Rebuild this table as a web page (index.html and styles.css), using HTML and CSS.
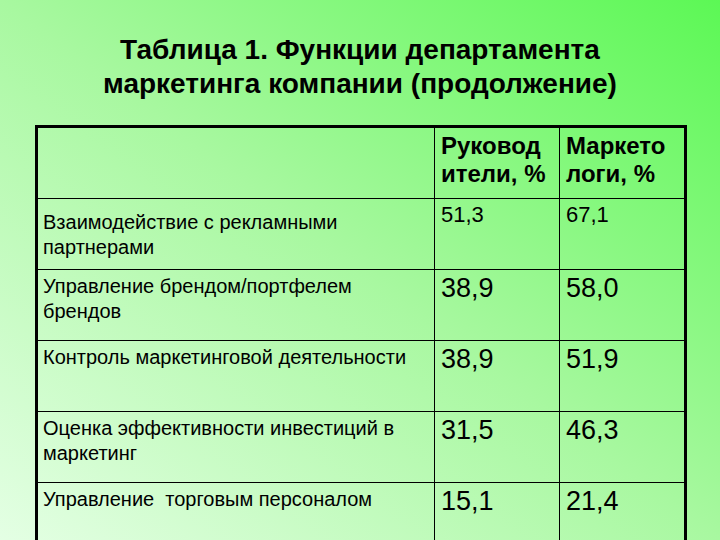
FILE: index.html
```html
<!DOCTYPE html>
<html lang="ru">
<head>
<meta charset="utf-8">
<link rel="stylesheet" href="styles.css">
</head>
<body>
<div class="slide">
  <h1 class="title">Таблица 1. Функции департамента<br>маркетинга компании (продолжение)</h1>
  <table class="grid">
    <colgroup><col class="c1"><col class="c2"><col class="c3"></colgroup>
    <tr class="head">
      <td></td>
      <td class="h">Руковод ители, %</td>
      <td class="h">Маркето логи, %</td>
    </tr>
    <tr class="r1">
      <td class="name">Взаимодействие с рекламными партнерами</td>
      <td class="num small">51,3</td>
      <td class="num small">67,1</td>
    </tr>
    <tr>
      <td class="name">Управление брендом/портфелем брендов</td>
      <td class="num">38,9</td>
      <td class="num">58,0</td>
    </tr>
    <tr>
      <td class="name">Контроль маркетинговой деятельности</td>
      <td class="num">38,9</td>
      <td class="num">51,9</td>
    </tr>
    <tr>
      <td class="name">Оценка эффективности инвестиций в маркетинг</td>
      <td class="num">31,5</td>
      <td class="num">46,3</td>
    </tr>
    <tr>
      <td class="name">Управление&nbsp; торговым персоналом</td>
      <td class="num">15,1</td>
      <td class="num">21,4</td>
    </tr>
  </table>
</div>
</body>
</html>
```
FILE: styles.css
```css
html, body {
  margin: 0;
  padding: 0;
}
body {
  width: 720px;
  height: 540px;
  overflow: hidden;
  background: linear-gradient(to top right, #e4ffe4 0%, #a8f8a0 50%, #5cf855 100%);
  font-family: "Liberation Sans", Arial, sans-serif;
  color: #000;
}
.slide {
  padding: 33px 0 0 35px;
}
.title {
  margin: 0 35px 0 0;
  text-align: center;
  font-size: 28px;
  line-height: 34px;
  font-weight: bold;
  height: 92px;
}
.grid {
  border-collapse: collapse;
  table-layout: fixed;
  width: 649px;
  border: 3px solid #000;
}
.c1 { width: 398px; }
.c2 { width: 125px; }
.c3 { width: 126px; }
.grid td {
  border: 1px solid #000;
  height: 71px;
  padding: 0 6px;
  vertical-align: top;
  box-sizing: border-box;
}
.head td { height: 72px; }
.h {
  font-weight: bold;
  font-size: 24px;
  line-height: 28px;
  padding-top: 4px !important;
}
.name {
  font-size: 20px;
  line-height: 25px;
  padding-top: 4px !important;
  padding-left: 5px !important;
}
.r1 .name { padding-top: 11px !important; }
.num {
  font-size: 27px;
  line-height: 30px;
  padding-top: 3px !important;
}
.num.small {
  font-size: 22px;
  line-height: 24px;
  padding-top: 4px !important;
}
```
